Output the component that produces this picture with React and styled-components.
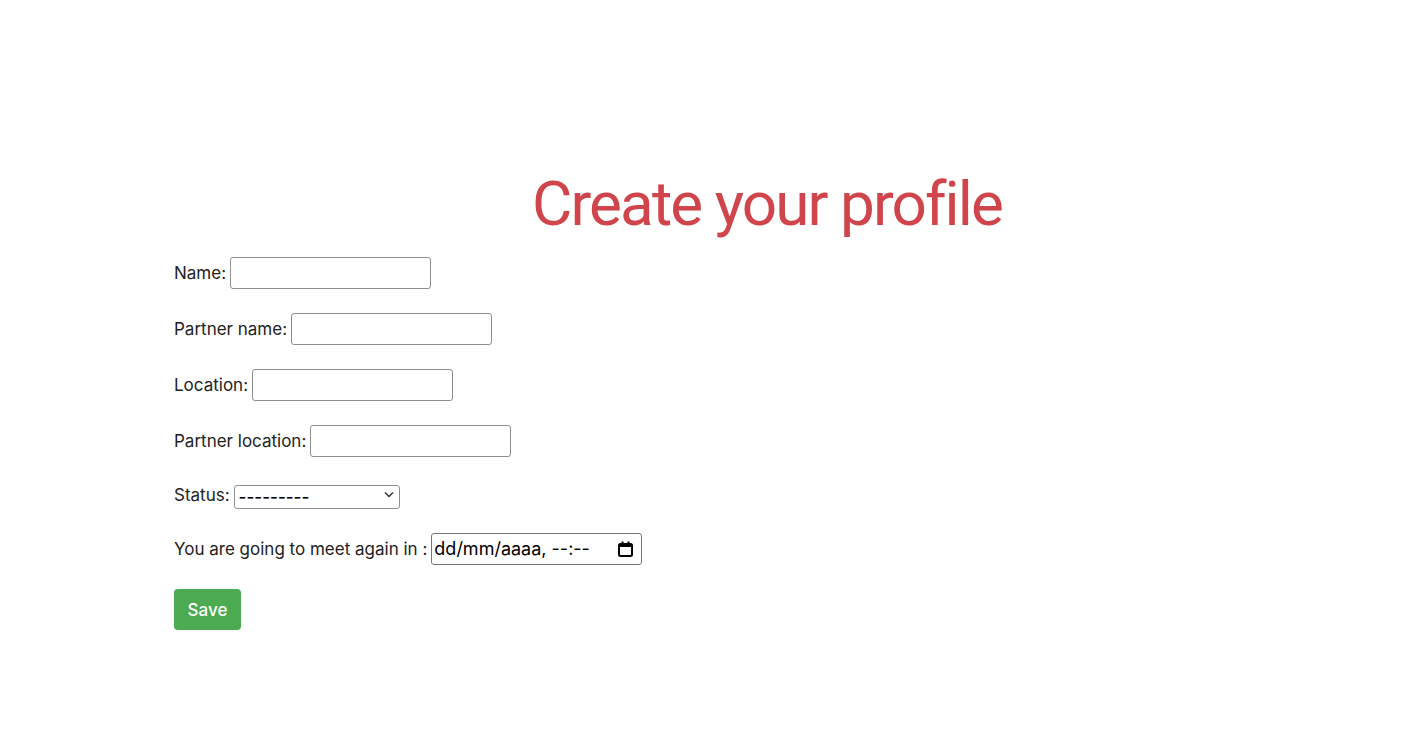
import React from 'react';
import styled, { createGlobalStyle } from 'styled-components';

const GlobalStyle = createGlobalStyle`
  body {
    margin: 0;
    background: #fff;
    font-family: Inter, "Noto Sans", sans-serif;
    color: #222;
  }
`;

const Page = styled.div`
  padding: 160px 42px 0 174px;
`;

const Title = styled.h1`
  margin: 0 0 9px;
  text-align: center;
  font-family: Roboto, Inter, sans-serif;
  font-size: 62px;
  font-weight: 400;
  letter-spacing: -1.9px;
  color: #d0444c;
  line-height: 88px;
`;

const Form = styled.form`
  display: flex;
  flex-direction: column;
  align-items: flex-start;
  gap: 24px;
`;

const Row = styled.label`
  display: flex;
  align-items: center;
  gap: 4px;
  min-height: 28px;
  font-size: 17px;
  line-height: 28px;
`;

const TextInput = styled.input`
  box-sizing: border-box;
  width: 201px;
  height: 32px;
  border: 1px solid #8f8f8f;
  border-radius: 3px;
  padding: 0 6px;
  font: inherit;
  background: #fff;
`;

const SelectWrap = styled.div`
  position: relative;
  width: 166px;
  height: 24px;
`;

const Select = styled.select`
  appearance: none;
  box-sizing: border-box;
  width: 100%;
  height: 100%;
  border: 1px solid #8f8f8f;
  border-radius: 3px;
  padding: 0 20px 0 4px;
  font-family: Inter, sans-serif;
  font-size: 17px;
  font-weight: 500;
  color: #000;
  background: #fff;
`;

const Chevron = styled.svg`
  position: absolute;
  right: 6px;
  top: 8px;
  pointer-events: none;
`;

const DateBox = styled.div`
  box-sizing: border-box;
  width: 211px;
  height: 32px;
  border: 1px solid #767676;
  border-radius: 3px;
  padding: 0 8px 0 2px;
  display: flex;
  align-items: center;
  justify-content: space-between;
  font-size: 18px;
  color: #000;
`;

const SaveButton = styled.button`
  width: 67px;
  height: 41px;
  border: none;
  border-radius: 4px;
  background: #4caa50;
  color: #fff;
  font-family: Inter, sans-serif;
  font-size: 17px;
  font-weight: 500;
  cursor: pointer;
`;

const fields = ['Name', 'Partner name', 'Location', 'Partner location'];

export default function App() {
  return (
    <Page>
      <GlobalStyle />
      <Title>Create your profile</Title>
      <Form onSubmit={(e) => e.preventDefault()}>
        {fields.map((f) => (
          <Row key={f}>
            {f}: <TextInput type="text" />
          </Row>
        ))}
        <Row>
          Status:
          <SelectWrap>
            <Select defaultValue="">
              <option value="">---------</option>
            </Select>
            <Chevron width="10" height="7" viewBox="0 0 10 7">
              <path d="M1 1.5 L5 5.5 L9 1.5" fill="none" stroke="#333" strokeWidth="1.5" />
            </Chevron>
          </SelectWrap>
        </Row>
        <Row>
          You are going to meet again in :
          <DateBox>
            <span>dd/mm/aaaa, --:--</span>
            <svg width="15" height="16" viewBox="0 0 15 16">
              <rect x="1" y="3" width="13" height="12" rx="1.5" fill="none" stroke="#000" strokeWidth="2" />
              <rect x="1" y="3" width="13" height="3" fill="#000" />
              <rect x="3.5" y="0.5" width="2" height="3" fill="#000" />
              <rect x="9.5" y="0.5" width="2" height="3" fill="#000" />
            </svg>
          </DateBox>
        </Row>
        <SaveButton type="submit">Save</SaveButton>
      </Form>
    </Page>
  );
}
